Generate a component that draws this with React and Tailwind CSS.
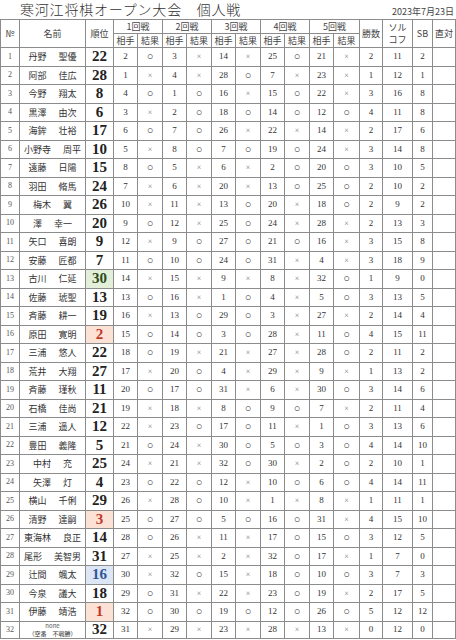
const rows = [
  [1, "丹野", "聖優", 22, [[2, "o"], [3, "x"], [14, "x"], [25, "o"], [21, "x"]], 2, 11, 2],
  [2, "阿部", "佳広", 28, [[1, "x"], [4, "x"], [28, "o"], [7, "x"], [23, "x"]], 1, 12, 1],
  [3, "今野", "翔太", 8, [[4, "o"], [1, "o"], [16, "x"], [15, "o"], [22, "x"]], 3, 16, 8],
  [4, "黒澤", "由次", 6, [[3, "x"], [2, "o"], [18, "o"], [14, "o"], [12, "o"]], 4, 11, 8],
  [5, "海鉾", "壮裕", 17, [[6, "o"], [7, "o"], [26, "x"], [22, "x"], [14, "x"]], 2, 17, 6],
  [6, "小野寺", "周平", 10, [[5, "x"], [8, "o"], [7, "o"], [19, "o"], [24, "x"]], 3, 14, 8],
  [7, "遠藤", "日陽", 15, [[8, "o"], [5, "x"], [6, "x"], [2, "o"], [20, "o"]], 3, 10, 5],
  [8, "羽田", "脩馬", 24, [[7, "x"], [6, "x"], [20, "x"], [13, "o"], [25, "o"]], 2, 10, 2],
  [9, "梅木", "翼", 26, [[10, "x"], [11, "x"], [13, "o"], [20, "x"], [18, "o"]], 2, 9, 2],
  [10, "澤", "幸一", 20, [[9, "o"], [12, "x"], [25, "o"], [24, "x"], [28, "x"]], 2, 13, 3],
  [11, "矢口", "喜朗", 9, [[12, "x"], [9, "o"], [27, "o"], [21, "o"], [16, "x"]], 3, 15, 8],
  [12, "安藤", "匠都", 7, [[11, "o"], [10, "o"], [24, "o"], [31, "x"], [4, "x"]], 3, 18, 9],
  [13, "古川", "仁延", 30, [[14, "x"], [15, "x"], [9, "x"], [8, "x"], [32, "o"]], 1, 9, 0],
  [14, "佐藤", "琥聖", 13, [[13, "o"], [16, "x"], [1, "o"], [4, "x"], [5, "o"]], 3, 13, 5],
  [15, "斉藤", "耕一", 19, [[16, "x"], [13, "o"], [29, "o"], [3, "x"], [27, "x"]], 2, 14, 4],
  [16, "原田", "寛明", 2, [[15, "o"], [14, "o"], [3, "o"], [28, "x"], [11, "o"]], 4, 15, 11],
  [17, "三浦", "悠人", 22, [[18, "o"], [19, "x"], [21, "x"], [27, "x"], [28, "o"]], 2, 11, 2],
  [18, "荒井", "大翔", 27, [[17, "x"], [20, "o"], [4, "x"], [29, "x"], [9, "x"]], 1, 13, 2],
  [19, "斉藤", "瑾秋", 11, [[20, "o"], [17, "o"], [31, "x"], [6, "x"], [30, "o"]], 3, 14, 6],
  [20, "石橋", "佳尚", 21, [[19, "x"], [18, "x"], [8, "o"], [9, "o"], [7, "x"]], 2, 11, 4],
  [21, "三浦", "遥人", 12, [[22, "x"], [23, "o"], [17, "o"], [11, "x"], [1, "o"]], 3, 13, 6],
  [22, "豊田", "義隆", 5, [[21, "o"], [24, "x"], [30, "o"], [5, "o"], [3, "o"]], 4, 14, 10],
  [23, "中村", "充", 25, [[24, "x"], [21, "x"], [32, "o"], [30, "x"], [2, "o"]], 2, 10, 1],
  [24, "矢澤", "灯", 4, [[23, "o"], [22, "o"], [12, "x"], [10, "o"], [6, "o"]], 4, 14, 11],
  [25, "横山", "千俐", 29, [[26, "x"], [28, "o"], [10, "x"], [1, "x"], [8, "x"]], 1, 11, 1],
  [26, "清野", "達嗣", 3, [[25, "o"], [27, "o"], [5, "o"], [16, "o"], [31, "x"]], 4, 15, 10],
  [27, "東海林", "良正", 14, [[28, "o"], [26, "x"], [11, "x"], [17, "o"], [15, "o"]], 3, 12, 5],
  [28, "尾形", "美智男", 31, [[27, "x"], [25, "x"], [2, "x"], [32, "o"], [17, "x"]], 1, 7, 0],
  [29, "辻間", "颯太", 16, [[30, "x"], [32, "o"], [15, "x"], [18, "o"], [10, "o"]], 3, 7, 3],
  [30, "今泉", "議大", 18, [[29, "o"], [31, "x"], [22, "x"], [23, "o"], [19, "x"]], 2, 17, 5],
  [31, "伊藤", "靖浩", 1, [[32, "o"], [30, "o"], [19, "o"], [12, "o"], [26, "o"]], 5, 12, 12],
];

const last = [32, 32, [[31, "x"], [29, "x"], [23, "x"], [28, "x"], [13, "x"]], 0, 12, 0];

const rankStyle = {
  30: "bg-[#e3efd9] text-[#2d4a1e]",
  2: "bg-[#fbe2d5] text-[#c0392b]",
  3: "bg-[#fbe2d5] text-[#c0392b]",
  1: "bg-[#fbe2d5] text-[#c0392b]",
  16: "bg-[#dce6f4] text-[#2f5597]",
};

const td = "border border-[#8c8c8c] text-center align-middle p-0";
const th = "border border-[#8c8c8c] text-center align-middle p-0 font-normal";

function Mark({ v }) {
  return v === "o" ? (
    <span className="text-[11px] text-[#333]">○</span>
  ) : (
    <span className="text-[8px] text-[#777]">×</span>
  );
}

function Games({ games }) {
  return games.map(([opp, res], i) => [
    <td key={"o" + i} className={td}>{opp}</td>,
    <td key={"r" + i} className={td}><Mark v={res} /></td>,
  ]);
}

export default function App() {
  return (
    <div
      className="w-[456px] h-[640px] bg-white text-[#222] overflow-hidden"
      style={{ fontFamily: '"Liberation Serif", "Noto Sans CJK JP", serif' }}
    >
      <div className="flex items-center justify-between h-[19px] pl-[20px] pr-[2px]">
        <div className="text-[14px] leading-[19px] text-[#333] tracking-[0.8px]" style={{ fontFamily: '"Noto Sans CJK JP", sans-serif', fontWeight: 300 }}>
          寒河江将棋オープン大会　個人戦
        </div>
        <div className="text-[9px] leading-[14px] text-[#444] pt-[4px]" style={{ fontFamily: '"Noto Sans CJK JP", sans-serif' }}>
          2023年7月23日
        </div>
      </div>

      <table className="table-fixed border-collapse w-[455px] border border-[#555] text-[9px] leading-none">
        <colgroup>
          <col className="w-[19px]" />
          <col className="w-[66px]" />
          <col className="w-[28px]" />
          <col className="w-[24px]" /><col className="w-[25px]" />
          <col className="w-[24px]" /><col className="w-[25px]" />
          <col className="w-[24px]" /><col className="w-[25px]" />
          <col className="w-[24px]" /><col className="w-[25px]" />
          <col className="w-[24px]" /><col className="w-[26px]" />
          <col className="w-[23px]" />
          <col className="w-[30px]" />
          <col className="w-[20px]" />
          <col className="w-[23px]" />
        </colgroup>
        <thead style={{ fontFamily: '"Noto Sans CJK JP", sans-serif' }} className="text-[#444]">
          <tr className="h-[14px]">
            <th rowSpan={2} className={th}>№</th>
            <th rowSpan={2} className={th}>名前</th>
            <th rowSpan={2} className={th}>順位</th>
            {["1回戦", "2回戦", "3回戦", "4回戦", "5回戦"].map((r) => (
              <th key={r} colSpan={2} className={th}>{r}</th>
            ))}
            <th rowSpan={2} className={th}>勝数</th>
            <th rowSpan={2} className={th + " leading-[12px]"}>ソル<br />コフ</th>
            <th rowSpan={2} className={th}>SB</th>
            <th rowSpan={2} className={th}>直対</th>
          </tr>
          <tr className="h-[14px]">
            {[1, 2, 3, 4, 5].map((r) => [
              <th key={"a" + r} className={th}>相手</th>,
              <th key={"b" + r} className={th}>結果</th>,
            ])}
          </tr>
        </thead>
        <tbody className="text-[#333]">
          {rows.map(([no, fam, given, rank, games, wins, sol, sb]) => (
            <tr key={no} className="h-[18.5px]">
              <td className={td + " text-[8px] text-[#555]"}>{no}</td>
              <td className={td} style={{ fontFamily: '"Noto Sans CJK JP", sans-serif' }}>
                <div className="flex justify-center gap-[12px] text-[9px]">
                  <span>{fam}</span>
                  <span>{given}</span>
                </div>
              </td>
              <td className={td + " text-[15px] font-bold " + (rankStyle[rank] || "text-[#222]")}>{rank}</td>
              <Games games={games} />
              <td className={td}>{wins}</td>
              <td className={td}>{sol}</td>
              <td className={td}>{sb}</td>
              <td className={td}></td>
            </tr>
          ))}
          <tr className="h-[17px]">
            <td className={td + " text-[8px] text-[#555]"}>{last[0]}</td>
            <td className={td} style={{ fontFamily: '"Noto Sans CJK JP", sans-serif' }}>
              <div className="flex flex-col items-center">
                <span className="text-[6px] leading-[7.5px] text-[#555]">none</span>
                <span className="text-[6px] leading-[7.5px]">（空番　不戦勝）</span>
              </div>
            </td>
            <td className={td + " text-[15px] font-bold text-[#222]"}>{last[1]}</td>
            <Games games={last[2]} />
            <td className={td}>{last[3]}</td>
            <td className={td}>{last[4]}</td>
            <td className={td}>{last[5]}</td>
            <td className={td}></td>
          </tr>
        </tbody>
      </table>
    </div>
  );
}
